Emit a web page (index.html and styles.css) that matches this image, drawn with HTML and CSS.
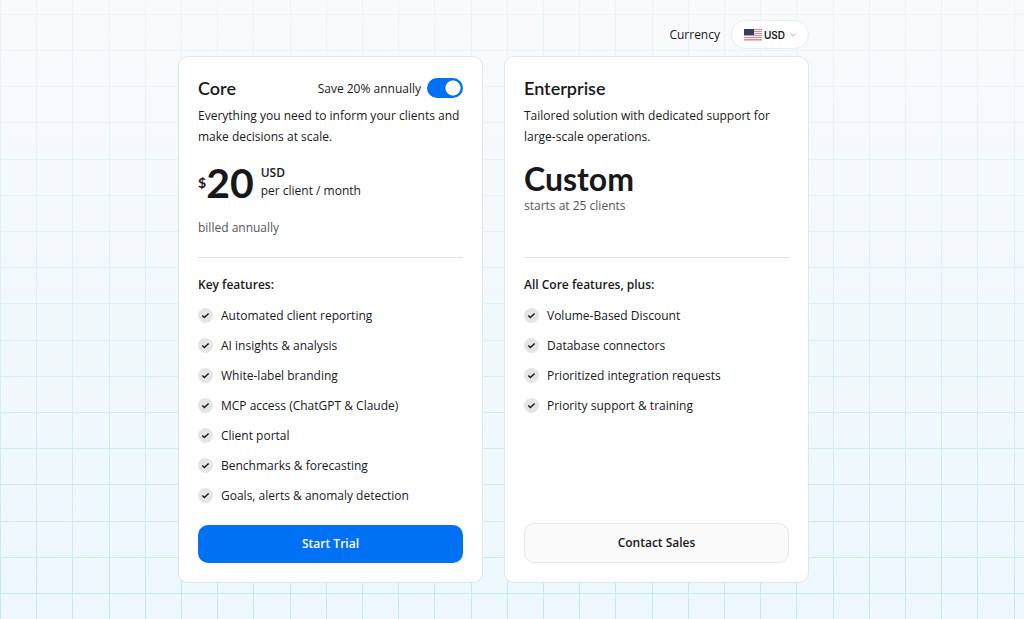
FILE: index.html
```html
<!DOCTYPE html>
<html lang="en">
<head>
<meta charset="utf-8">
<meta name="viewport" content="width=device-width, initial-scale=1">
<title>Pricing</title>
<link rel="stylesheet" href="styles.css">
</head>
<body>
<svg class="sprite" aria-hidden="true">
  <symbol id="check" viewBox="0 0 15 15">
    <circle cx="7.5" cy="7.5" r="7.5" fill="#e5e5e6"/>
    <path d="M4.300 7.500l2.100 2.100 4.200-4.100" fill="none" stroke="#18181c" stroke-width="1.4"/>
  </symbol>
</svg>
<main class="pricing">
  <div class="currency">
    <label class="currency-label" for="currency">Currency</label>
    <div class="pill">
      <svg class="flag" viewBox="0 0 18 12" aria-hidden="true">
        <path fill="#fbeef0" d="M0 0h18v12H0z"/>
        <path stroke="#e58a94" stroke-width="1" d="M0 .5h18M0 2.5h18M0 4.5h18M0 6.5h18M0 8.5h18M0 10.5h18M0 12h18"/>
        <path fill="#2f3c66" d="M0 0h10v6H0z"/>
        <path stroke="#56628a" stroke-width=".5" stroke-dasharray=".6 1.2" d="M1 1.3h8.500M2 3h7M1 4.700h8.500"/>
      </svg>
      <select id="currency" class="currency-select"><option>USD</option><option>EUR</option><option>GBP</option></select>
      <svg class="chevron" viewBox="0 0 6 4" aria-hidden="true"><path d="M.5.5L3 3 5.500.5" fill="none" stroke="#b9bdbd"/></svg>
    </div>
  </div>

  <div class="plans">
    <section class="card">
      <div class="card-head">
        <h2 class="name">Core</h2>
        <label class="billing">Save 20% annually <input class="switch" type="checkbox" role="switch" checked></label>
      </div>
      <p class="summary">Everything you need to inform your clients and make decisions at scale.</p>
      <div class="price">
        <div class="amount">
          <span class="sign">$</span><span class="figure">20</span>
          <span class="unit"><strong class="code">USD</strong><span>per client / month</span></span>
        </div>
        <p class="note">billed annually</p>
      </div>
      <h3 class="list-title">Key features:</h3>
      <ul class="features">
        <li class="feature"><svg class="tick"><use href="#check"/></svg>Automated client reporting</li>
        <li class="feature"><svg class="tick"><use href="#check"/></svg>AI insights &amp; analysis</li>
        <li class="feature"><svg class="tick"><use href="#check"/></svg>White-label branding</li>
        <li class="feature"><svg class="tick"><use href="#check"/></svg>MCP access (ChatGPT &amp; Claude)</li>
        <li class="feature"><svg class="tick"><use href="#check"/></svg>Client portal</li>
        <li class="feature"><svg class="tick"><use href="#check"/></svg>Benchmarks &amp; forecasting</li>
        <li class="feature"><svg class="tick"><use href="#check"/></svg>Goals, alerts &amp; anomaly detection</li>
      </ul>
      <button class="action primary" type="button">Start Trial</button>
    </section>

    <section class="card">
      <div class="card-head">
        <h2 class="name">Enterprise</h2>
      </div>
      <p class="summary">Tailored solution with dedicated support for large-scale operations.</p>
      <div class="price">
        <p class="custom">Custom</p>
        <p class="note">starts at 25 clients</p>
      </div>
      <h3 class="list-title">All Core features, plus:</h3>
      <ul class="features">
        <li class="feature"><svg class="tick"><use href="#check"/></svg>Volume-Based Discount</li>
        <li class="feature"><svg class="tick"><use href="#check"/></svg>Database connectors</li>
        <li class="feature"><svg class="tick"><use href="#check"/></svg>Prioritized integration requests</li>
        <li class="feature"><svg class="tick"><use href="#check"/></svg>Priority support &amp; training</li>
      </ul>
      <button class="action secondary" type="button">Contact Sales</button>
    </section>
  </div>
</main>
</body>
</html>
```
FILE: styles.css
```css
* { box-sizing: border-box; }

body {
  margin: 0;
  min-height: 100vh;
  padding: 20px 37px 36px 0;
  background: linear-gradient(#f8fafb, #f2f9fc 50%, #edf8ff);
  color: #18181c;
  font-family: "Open Sans", "Liberation Sans", sans-serif;
  font-size: 12px;
  line-height: 21px;
}

/* Graph-paper lines: five cells per 181px, fading out towards the top */
body::before {
  content: "";
  position: absolute;
  inset: 0;
  z-index: -1;
  --line: #b9e2f3;
  background:
    repeating-linear-gradient(to right, var(--line) 0 1px, transparent 1px 36px, var(--line) 36px 37px, transparent 37px 72px, var(--line) 72px 73px, transparent 73px 109px, var(--line) 109px 110px, transparent 110px 145px, var(--line) 145px 146px, transparent 146px 181px),
    repeating-linear-gradient(to bottom, transparent 0 14px, var(--line) 14px 15px, transparent 15px 50px, var(--line) 50px 51px, transparent 51px 86px, var(--line) 86px 87px, transparent 87px 122px, var(--line) 122px 123px, transparent 123px 159px, var(--line) 159px 160px, transparent 160px 181px);
  mask-image: linear-gradient(rgb(0 0 0 / 20%), rgb(0 0 0 / 40%) 50%, rgb(0 0 0 / 75%));
}

h2, h3, p, ul { margin: 0; padding: 0; }
.sprite { position: absolute; width: 0; height: 0; }

.pricing { max-width: 631px; margin: 0 auto; }

.currency {
  display: flex;
  justify-content: flex-end;
  align-items: center;
  gap: 11px;
  margin-bottom: 7px;
}
.pill {
  display: flex;
  align-items: center;
  height: 29px;
  padding: 0 12px;
  border: 1px solid #e9eeef;
  border-radius: 15px;
  background: #fff;
}
.flag { width: 18px; height: 12px; margin-right: 2px; }
.currency-select {
  appearance: none;
  border: 0;
  padding: 0;
  background: none;
  color: inherit;
  font: 600 10px/16px Inter, sans-serif;
}
.chevron { width: 6px; height: 4px; margin-left: 4px; }

.plans { display: grid; grid-template-columns: 1fr 1fr; gap: 21px; }
.card {
  display: flex;
  flex-direction: column;
  padding: 21px 19px 19px;
  border: 1px solid #dfe7ea;
  border-radius: 10px;
  background: #fff;
}
.card-head {
  display: flex;
  justify-content: space-between;
  align-items: center;
  height: 20px;
  margin-bottom: 7px;
}
.name, .sign, .figure, .custom { font-family: Lato, "Liberation Sans", sans-serif; font-weight: 700; }
.name { font-size: 18px; font-weight: 600; }
.billing { display: flex; align-items: center; gap: 6px; }
.switch {
  appearance: none;
  width: 36px;
  height: 20px;
  margin: 0;
  border-radius: 10px;
  background: radial-gradient(circle at 26px 10px, #fff 7px, #0071f2 8px);
}

.price {
  height: 111px;
  padding-top: 16px;
  border-bottom: 1px solid #dfe3e5;
}
.amount { display: flex; align-items: center; height: 38px; }
.sign { font-size: 14px; }
.figure { margin-right: 7px; font-size: 41px; }
.unit { display: grid; line-height: 18px; }
.code { font-weight: 600; }
.note { color: #55555c; }
.amount + .note { margin-top: 16px; }
.custom { font-size: 32px; line-height: 32px; }

.list-title { margin: 16px 0 5px; font-size: 12px; font-weight: 600; }
.features { list-style: none; margin-bottom: 15px; }
.feature { display: flex; align-items: center; gap: 8px; height: 30px; }
.tick { width: 15px; height: 15px; }

.action {
  height: 38px;
  margin-top: auto;
  border-radius: 10px;
  font: 600 12px/20px "Open Sans", "Liberation Sans", sans-serif;
}
.primary { border: 0; background: #0071f2; color: #fff; }
.secondary { height: 40px; border: 1px solid #e5e7e8; background: #fafafa; color: #18181c; }
```
